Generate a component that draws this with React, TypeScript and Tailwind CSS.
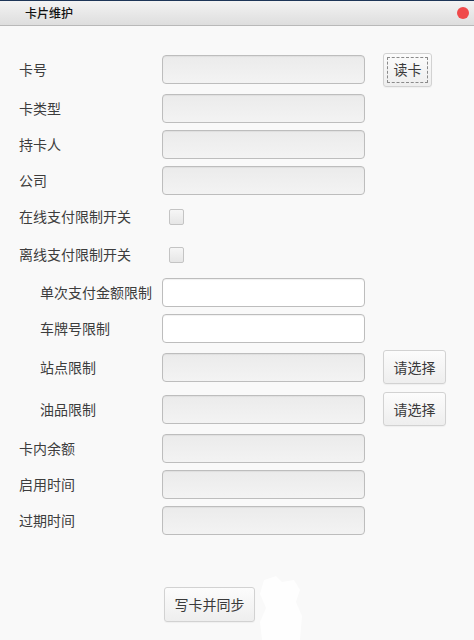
import React from "react";

const font = { fontFamily: '"Noto Sans CJK SC", "Liberation Sans", sans-serif' };

function Field({ white = false }: { white?: boolean }) {
  return (
    <div
      className={
        "w-[203px] h-[29px] rounded-[4px] border border-[#bdbdbd] " +
        (white
          ? "bg-white shadow-[inset_0_1px_1px_rgba(0,0,0,0.06)]"
          : "bg-gradient-to-b from-[#ebebeb] to-[#f3f3f3] shadow-[inset_0_1px_1px_rgba(0,0,0,0.05)]")
      }
    />
  );
}

function Btn({ children, w, focus = false }: { children: React.ReactNode; w: string; focus?: boolean }) {
  return (
    <div
      className={
        "relative h-[34px] flex items-center justify-center rounded-[3px] border border-[#d2d2d2] bg-gradient-to-b from-[#fcfcfc] to-[#eeeeee] text-[14px] text-[#3a3a3a] shadow-[0_1px_1px_rgba(0,0,0,0.04)] " +
        w
      }
    >
      {focus && <div className="absolute inset-[3px] border border-dashed border-[#8a8a8a] rounded-[1px]" />}
      <span className="relative">{children}</span>
    </div>
  );
}

function Row({
  label,
  indent = false,
  mt,
  h = "h-[29px]",
  children,
}: {
  label: string;
  indent?: boolean;
  mt: string;
  h?: string;
  children: React.ReactNode;
}) {
  return (
    <div className={"flex items-center " + mt + " " + h}>
      <div className={"w-[143px] shrink-0 text-[14px] text-[#3d3d3d] leading-none -mt-[1px] " + (indent ? "pl-[21px]" : "")}>{label}</div>
      {children}
    </div>
  );
}

function Check() {
  return (
    <div className="ml-[7px] w-[15px] h-[16px] rounded-[2px] border border-[#c4c4c4] bg-gradient-to-b from-[#f6f6f6] to-[#e6e6e6]" />
  );
}

export default function App() {
  return (
    <div className="w-[474px] h-[640px] bg-[#f9f9f9] overflow-hidden relative" style={font}>
      <div className="h-[26px] border-t border-[#1d3557] border-b border-b-[#b9b9b9] bg-gradient-to-b from-[#f3f3f3] to-[#dedede] flex items-center justify-between pl-[25px] pr-[5px]">
        <span className="text-[12px] text-[#111] font-medium leading-none">卡片维护</span>
        <div className="w-[12px] h-[12px] rounded-full bg-[#f0494a]" />
      </div>
      <div className="pl-[19px]">
        <Row label="卡号" mt="mt-[27px]" h="h-[33px]">
          <Field />
          <div className="ml-[18px]">
            <Btn w="w-[49px] h-[33px]" focus>
              读卡
            </Btn>
          </div>
        </Row>
        <Row label="卡类型" mt="mt-[8px]">
          <Field />
        </Row>
        <Row label="持卡人" mt="mt-[7px]">
          <Field />
        </Row>
        <Row label="公司" mt="mt-[7px]">
          <Field />
        </Row>
        <Row label="在线支付限制开关" mt="mt-[7px]">
          <Check />
        </Row>
        <Row label="离线支付限制开关" mt="mt-[9px]">
          <Check />
        </Row>
        <Row label="单次支付金额限制" indent mt="mt-[9px]">
          <Field white />
        </Row>
        <Row label="车牌号限制" indent mt="mt-[7px]">
          <Field white />
        </Row>
        <Row label="站点限制" indent mt="mt-[7px]" h="h-[34px]">
          <Field />
          <div className="ml-[18px]">
            <Btn w="w-[63px]">请选择</Btn>
          </div>
        </Row>
        <Row label="油品限制" indent mt="mt-[8px]" h="h-[34px]">
          <Field />
          <div className="ml-[18px]">
            <Btn w="w-[63px]">请选择</Btn>
          </div>
        </Row>
        <Row label="卡内余额" mt="mt-[8px]">
          <Field />
        </Row>
        <Row label="启用时间" mt="mt-[7px]">
          <Field />
        </Row>
        <Row label="过期时间" mt="mt-[7px]">
          <Field />
        </Row>
        <div className="mt-[52px] ml-[145px] flex">
          <Btn w="w-[91px] h-[35px]">写卡并同步</Btn>
        </div>
      </div>
      <svg className="absolute left-[256px] top-[572px]" width="50" height="68" viewBox="0 0 50 68">
        <path
          d="M8 8 L20 4 L26 10 L38 8 L44 18 L40 30 L46 44 L44 68 L6 68 L4 50 L10 36 L4 22 Z"
          fill="#ffffff"
          opacity="0.85"
        />
      </svg>
    </div>
  );
}
